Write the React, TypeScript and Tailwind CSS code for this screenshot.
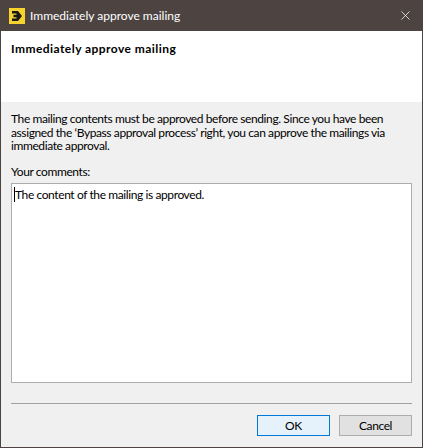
import { X } from 'lucide-react';

const AppIcon = () => (
  <svg width="16" height="16" viewBox="0 0 16 16">
    <rect x="0" y="0" width="16" height="16" fill="#f7d330" />
    <path d="M3 3 H9 L13 8 L9 13 H3 V10.5 H7.5 V9.2 H4.5 V6.8 H7.5 V5.5 H3 Z" fill="#1a1a1a" />
  </svg>
);

const App = () => {
  return (
    <div
      className="w-[423px] h-[448px] flex flex-col bg-[#f0f0f0] border border-[#4d4442] text-[12px] text-black tracking-[-0.4px]"
      style={{ fontFamily: '"Segoe UI", Lato, sans-serif' }}
    >
      {/* title bar */}
      <div className="h-[31px] -mt-px -mx-px bg-[#4d4442] flex items-center pl-[9px] pr-[10px] shrink-0">
        <AppIcon />
        <span className="ml-[5px] text-[12px] text-white tracking-normal">Immediately approve mailing</span>
        <div className="ml-auto">
          <X size={15} strokeWidth={1.2} color="#fff" />
        </div>
      </div>

      <div className="bg-white h-[71px] px-[10px] pt-[9px] shrink-0">
        <div className="font-bold tracking-[0.45px]">Immediately approve mailing</div>
      </div>

      <div className="flex-1 flex flex-col px-[10px] pt-[10px] pb-[11px]">
        <p className="leading-[13.5px]">
          The mailing contents must be approved before sending. Since you have been assigned the ‘Bypass approval
          process’ right, you can approve the mailings via immediate approval.
        </p>
        <div className="mt-[10px] mb-[2px]">Your comments:</div>
        <div className="h-[200px] bg-white border border-[#adadad] px-[2px] pt-[2px]">
          <span className="border-l border-black">The content of the mailing is approved.</span>
        </div>
        <div className="mt-[20px] border-t border-[#a0a0a0]" />
        <div className="mt-auto flex justify-end gap-[9px]">
          <button className="w-[73px] h-[21px] bg-[#e5f1fb] border border-[#0078d7] text-[12px]">OK</button>
          <button className="w-[73px] h-[21px] bg-[#e1e1e1] border border-[#adadad] text-[12px]">Cancel</button>
        </div>
      </div>
    </div>
  );
};

export default App;
